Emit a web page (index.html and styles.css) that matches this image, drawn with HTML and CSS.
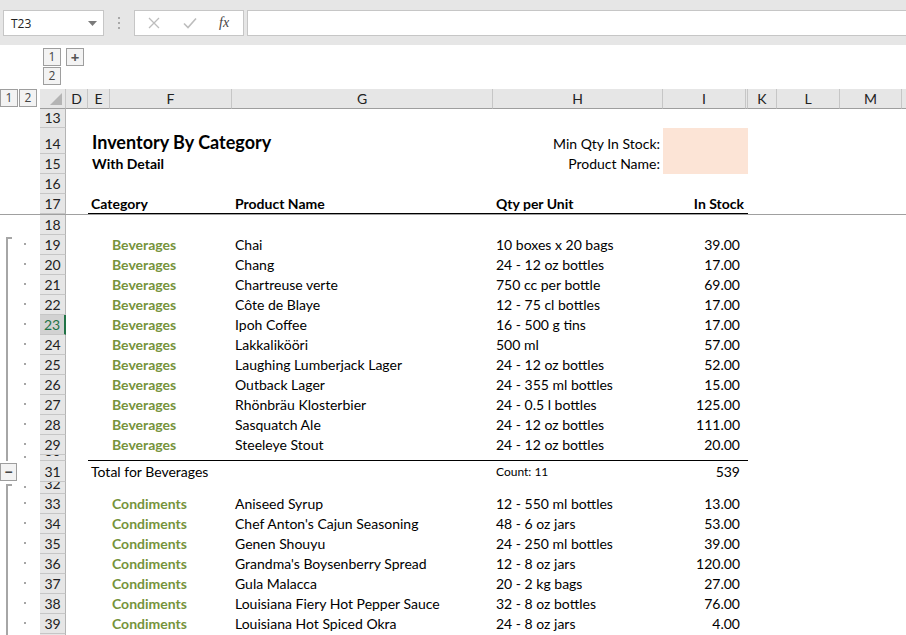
FILE: index.html
```html
<!DOCTYPE html>
<html>
<head>
<meta charset="utf-8">
<link rel="stylesheet" href="styles.css">
</head>
<body>
<div class="topbar">
  <div class="namebox"><span>T23</span><svg width="9" height="5" viewBox="0 0 9 5"><path d="M0 0H9L4.5 5Z" fill="#7a7a7a"/></svg></div>
  <div class="sep"><i></i><i></i><i></i></div>
  <div class="fbtns">
    <svg width="12" height="12" viewBox="0 0 12 12"><path d="M1 1L11 11M11 1L1 11" stroke="#bdbdbd" stroke-width="1.3" fill="none"/></svg>
    <svg width="14" height="12" viewBox="0 0 14 12"><path d="M1 6.5L5 10.5L13 1.5" stroke="#bdbdbd" stroke-width="1.6" fill="none"/></svg>
    <span class="fx">fx</span>
  </div>
  <div class="finput"></div>
</div>
<div class="colgroups">
  <div class="lvlstack"><div class="btn">1</div><div class="btn">2</div></div>
  <div class="btn plus">+</div>
</div>
<div class="sheet">
  <div class="row hdr">
    <div class="lvls"><div class="btn">1</div><div class="btn">2</div></div>
    <div class="corner"><svg width="12" height="12" viewBox="0 0 12 12"><path d="M12 0V12H0Z" fill="#b4b4b4"/></svg></div>
    <div class="ch">D</div><div class="ch">E</div><div class="ch">F</div><div class="ch">G</div><div class="ch">H</div><div class="ch">I</div><div class="ch j"></div><div class="ch">K</div><div class="ch">L</div><div class="ch">M</div><div class="ch last"></div>
  </div>

  <div class="row h19"><div class="ol"></div><div class="rh">13</div></div>
  <div class="row h26">
    <div class="ol"></div><div class="rh">14</div>
    <div class="c title">Inventory By Category</div>
    <div class="c lbl">Min Qty In Stock:</div>
    <div class="c inp"></div>
  </div>
  <div class="row">
    <div class="ol"></div><div class="rh">15</div>
    <div class="c subtitle">With Detail</div>
    <div class="c lbl">Product Name:</div>
    <div class="c inp"></div>
  </div>
  <div class="row"><div class="ol"></div><div class="rh">16</div></div>
  <div class="row frozen">
    <div class="ol"></div><div class="rh">17</div>
    <div class="c th cathead">Category</div>
    <div class="c th prod">Product Name</div>
    <div class="c th qty">Qty per Unit</div>
    <div class="c th stockhead">In Stock</div>
  </div>
  <div class="row"><div class="ol"></div><div class="rh">18</div></div>

  <div class="row"><div class="ol"><i class="vl top"></i><i class="tick"></i><i class="dot"></i></div><div class="rh">19</div><div class="c cat">Beverages</div><div class="c prod">Chai</div><div class="c qty">10 boxes x 20 bags</div><div class="c stock">39.00</div></div>
  <div class="row"><div class="ol"><i class="vl"></i><i class="dot"></i></div><div class="rh">20</div><div class="c cat">Beverages</div><div class="c prod">Chang</div><div class="c qty">24 - 12 oz bottles</div><div class="c stock">17.00</div></div>
  <div class="row"><div class="ol"><i class="vl"></i><i class="dot"></i></div><div class="rh">21</div><div class="c cat">Beverages</div><div class="c prod">Chartreuse verte</div><div class="c qty">750 cc per bottle</div><div class="c stock">69.00</div></div>
  <div class="row"><div class="ol"><i class="vl"></i><i class="dot"></i></div><div class="rh">22</div><div class="c cat">Beverages</div><div class="c prod">Côte de Blaye</div><div class="c qty">12 - 75 cl bottles</div><div class="c stock">17.00</div></div>
  <div class="row"><div class="ol"><i class="vl"></i><i class="dot"></i></div><div class="rh sel">23</div><div class="c cat">Beverages</div><div class="c prod">Ipoh Coffee</div><div class="c qty">16 - 500 g tins</div><div class="c stock">17.00</div></div>
  <div class="row"><div class="ol"><i class="vl"></i><i class="dot"></i></div><div class="rh">24</div><div class="c cat">Beverages</div><div class="c prod">Lakkalikööri</div><div class="c qty">500 ml</div><div class="c stock">57.00</div></div>
  <div class="row"><div class="ol"><i class="vl"></i><i class="dot"></i></div><div class="rh">25</div><div class="c cat">Beverages</div><div class="c prod">Laughing Lumberjack Lager</div><div class="c qty">24 - 12 oz bottles</div><div class="c stock">52.00</div></div>
  <div class="row"><div class="ol"><i class="vl"></i><i class="dot"></i></div><div class="rh">26</div><div class="c cat">Beverages</div><div class="c prod">Outback Lager</div><div class="c qty">24 - 355 ml bottles</div><div class="c stock">15.00</div></div>
  <div class="row"><div class="ol"><i class="vl"></i><i class="dot"></i></div><div class="rh">27</div><div class="c cat">Beverages</div><div class="c prod">Rhönbräu Klosterbier</div><div class="c qty">24 - 0.5 l bottles</div><div class="c stock">125.00</div></div>
  <div class="row"><div class="ol"><i class="vl"></i><i class="dot"></i></div><div class="rh">28</div><div class="c cat">Beverages</div><div class="c prod">Sasquatch Ale</div><div class="c qty">24 - 12 oz bottles</div><div class="c stock">111.00</div></div>
  <div class="row"><div class="ol"><i class="vl"></i><i class="dot"></i></div><div class="rh">29</div><div class="c cat">Beverages</div><div class="c prod">Steeleye Stout</div><div class="c qty">24 - 12 oz bottles</div><div class="c stock">20.00</div></div>
  <div class="row h6"><div class="ol"><i class="vl"></i><i class="dot"></i></div><div class="rh">30</div><div class="c rule"></div></div>
  <div class="row h21">
    <div class="ol"><div class="btn minus">−</div></div><div class="rh">31</div>
    <div class="c total">Total for Beverages</div>
    <div class="c qty count">Count: 11</div>
    <div class="c stock">539</div>
  </div>
  <div class="row h12"><div class="ol"><i class="vl top"></i><i class="tick"></i><i class="dot"></i></div><div class="rh">32</div></div>

  <div class="row"><div class="ol"><i class="vl"></i><i class="dot"></i></div><div class="rh">33</div><div class="c cat">Condiments</div><div class="c prod">Aniseed Syrup</div><div class="c qty">12 - 550 ml bottles</div><div class="c stock">13.00</div></div>
  <div class="row"><div class="ol"><i class="vl"></i><i class="dot"></i></div><div class="rh">34</div><div class="c cat">Condiments</div><div class="c prod">Chef Anton's Cajun Seasoning</div><div class="c qty">48 - 6 oz jars</div><div class="c stock">53.00</div></div>
  <div class="row"><div class="ol"><i class="vl"></i><i class="dot"></i></div><div class="rh">35</div><div class="c cat">Condiments</div><div class="c prod">Genen Shouyu</div><div class="c qty">24 - 250 ml bottles</div><div class="c stock">39.00</div></div>
  <div class="row"><div class="ol"><i class="vl"></i><i class="dot"></i></div><div class="rh">36</div><div class="c cat">Condiments</div><div class="c prod">Grandma's Boysenberry Spread</div><div class="c qty">12 - 8 oz jars</div><div class="c stock">120.00</div></div>
  <div class="row"><div class="ol"><i class="vl"></i><i class="dot"></i></div><div class="rh">37</div><div class="c cat">Condiments</div><div class="c prod">Gula Malacca</div><div class="c qty">20 - 2 kg bags</div><div class="c stock">27.00</div></div>
  <div class="row"><div class="ol"><i class="vl"></i><i class="dot"></i></div><div class="rh">38</div><div class="c cat">Condiments</div><div class="c prod">Louisiana Fiery Hot Pepper Sauce</div><div class="c qty">32 - 8 oz bottles</div><div class="c stock">76.00</div></div>
  <div class="row"><div class="ol"><i class="vl"></i><i class="dot"></i></div><div class="rh">39</div><div class="c cat">Condiments</div><div class="c prod">Louisiana Hot Spiced Okra</div><div class="c qty">24 - 8 oz jars</div><div class="c stock">4.00</div></div>
  <div class="row"><div class="ol"><i class="vl"></i><i class="dot"></i></div><div class="rh">40</div></div>
</div>
</body>
</html>
```

FILE: styles.css
```css
html, body {
  margin: 0;
  padding: 0;
  background: #fff;
  overflow: hidden;
}
body {
  width: 906px;
  height: 635px;
  font-family: Lato, "Liberation Sans", sans-serif;
  color: #000;
}

/* formula bar */
.topbar {
  height: 45px;
  box-sizing: border-box;
  background: #e6e6e6;
  padding-top: 10px;
  display: flex;
  align-items: flex-start;
}
.namebox {
  margin-left: 3px;
  width: 101px;
  height: 26px;
  box-sizing: border-box;
  border: 1px solid #c6c6c6;
  background: #fff;
  display: flex;
  align-items: center;
  justify-content: space-between;
  padding: 0 6px 0 7px;
  font: 12px "Open Sans", "Noto Sans", sans-serif;
  color: #222;
}
.sep {
  width: 30px;
  height: 26px;
  display: flex;
  flex-direction: column;
  align-items: center;
  justify-content: center;
  gap: 3px;
}
.sep i {
  display: block;
  width: 2px;
  height: 2px;
  background: #a8a8a8;
}
.fbtns {
  width: 110px;
  height: 26px;
  box-sizing: border-box;
  border: 1px solid #c6c6c6;
  background: #fff;
  display: flex;
  align-items: center;
  padding-left: 13px;
  gap: 23px;
}
.fx {
  font: italic 14px "Liberation Serif", serif;
  color: #444;
  margin-left: -1px;
}
.finput {
  flex: 1;
  margin-left: 3px;
  height: 26px;
  box-sizing: border-box;
  border: 1px solid #c6c6c6;
  border-right: none;
  background: #fff;
}

/* outline buttons */
.btn {
  box-sizing: border-box;
  width: 18px;
  height: 18px;
  border: 1px solid #9e9e9e;
  background: #f3f3f3;
  color: #444;
  font: 12px "Open Sans", "Noto Sans", sans-serif;
  display: flex;
  align-items: center;
  justify-content: center;
  line-height: 1;
}
.colgroups {
  height: 44px;
  box-sizing: border-box;
  padding: 3px 0 0 43px;
  display: flex;
  gap: 5px;
  align-items: flex-start;
}
.lvlstack {
  display: flex;
  flex-direction: column;
  gap: 1px;
}
.plus {
  font-size: 15px;
  font-weight: bold;
  color: #555;
}

/* sheet grid */
.row {
  display: grid;
  grid-template-columns: 40px 26px 22px 22px 122px 261px 170px 83px 2px 29px 63px 62px 1fr;
  height: 20px;
  overflow: hidden;
}
.row > * { grid-row: 1; }
.h19 { height: 19px; }
.h26 { height: 26px; }
.h6 { height: 6px; }
.h21 { height: 21px; }
.h12 { height: 12px; }

.hdr { height: 20px; }
.ol { grid-column: 1; }
.rh { grid-column: 2; }

.lvls {
  grid-column: 1;
  display: flex;
  gap: 1px;
  align-items: flex-start;
}
.corner {
  grid-column: 2;
  background: #e6e6e6;
  border-right: 1px solid #c6c6c6;
  border-bottom: 1px solid #9e9e9e;
  display: flex;
  justify-content: flex-end;
  align-items: flex-end;
  padding: 0 3px 3px 0;
}
.ch {
  background: #e6e6e6;
  border-right: 1px solid #c6c6c6;
  border-bottom: 1px solid #9e9e9e;
  box-sizing: border-box;
  text-align: center;
  font: 14px Lato, "Liberation Sans", sans-serif;
  line-height: 19px;
  color: #222;
}
.ch.j { border-right: 1px solid #c6c6c6; }
.ch.last { border-right: none; }

.rh {
  background: #e6e6e6;
  border-right: 1px solid #b4b4b4;
  border-bottom: 1px solid #c6c6c6;
  box-sizing: border-box;
  display: flex;
  justify-content: center;
  align-items: flex-end;
  font: 14px Lato, "Liberation Sans", sans-serif;
  line-height: 19px;
  color: #222;
  overflow: hidden;
}
.rh.sel {
  background: #d2d2d2;
  color: #217346;
  border-right: 2px solid #217346;
}

/* outline bars */
.ol {
  display: grid;
  grid-template-columns: 6px 2px 16px 2px 14px;
  grid-template-rows: 100%;
  height: 100%;
  overflow: hidden;
}
.ol i { display: block; grid-row: 1; }
.vl {
  grid-column: 2;
  background: #a6a6a6;
}
.vl.top { margin-top: 2px; }
.tick {
  grid-column: 3;
  width: 4px;
  height: 2px;
  margin-top: 2px;
  background: #a6a6a6;
}
.dot {
  grid-column: 4;
  height: 2px;
  align-self: center;
  margin-bottom: 3px;
  background: #a6a6a6;
}
.minus {
  margin-top: 2px;
  width: 17px;
  height: 18px;
  font-size: 14px;
  font-weight: bold;
  color: #444;
}

/* cells */
.c {
  align-self: end;
  white-space: nowrap;
  font-size: 14px;
  line-height: 20px;
  box-sizing: border-box;
}
.title {
  grid-column: 4 / span 4;
  padding-left: 4px;
  font-size: 18px;
  font-weight: bold;
  line-height: 24px;
}
.subtitle {
  grid-column: 4 / span 3;
  padding-left: 4px;
  font-weight: bold;
  font-size: 14px;
}
.lbl {
  grid-column: 7;
  text-align: right;
  padding-right: 3px;
}
.inp {
  grid-column: 8 / span 2;
  align-self: stretch;
  background: #fce4d6;
}
.th { font-weight: bold; border-bottom: 1px solid #000; line-height: 19px; }
.cathead { grid-column: 4 / span 2; padding-left: 3px; }
.prod { grid-column: 6; padding-left: 3px; }
.qty { grid-column: 7; padding-left: 3px; }
.stockhead { grid-column: 8 / span 2; text-align: right; padding-right: 4px; }
.stock { grid-column: 8 / span 2; text-align: right; padding-right: 8px; }
.cat {
  grid-column: 5;
  padding-left: 2px;
  font-weight: bold;
  color: #76933c;
}
.frozen {
  height: 21px;
  border-bottom: 1px solid #a0a0a0;
  box-sizing: border-box;
}
.rule {
  grid-column: 4 / span 6;
  align-self: stretch;
  border-bottom: 1px solid #000;
}
.total { grid-column: 4 / span 2; padding-left: 3px; }
.count { font-size: 12px; }
```
